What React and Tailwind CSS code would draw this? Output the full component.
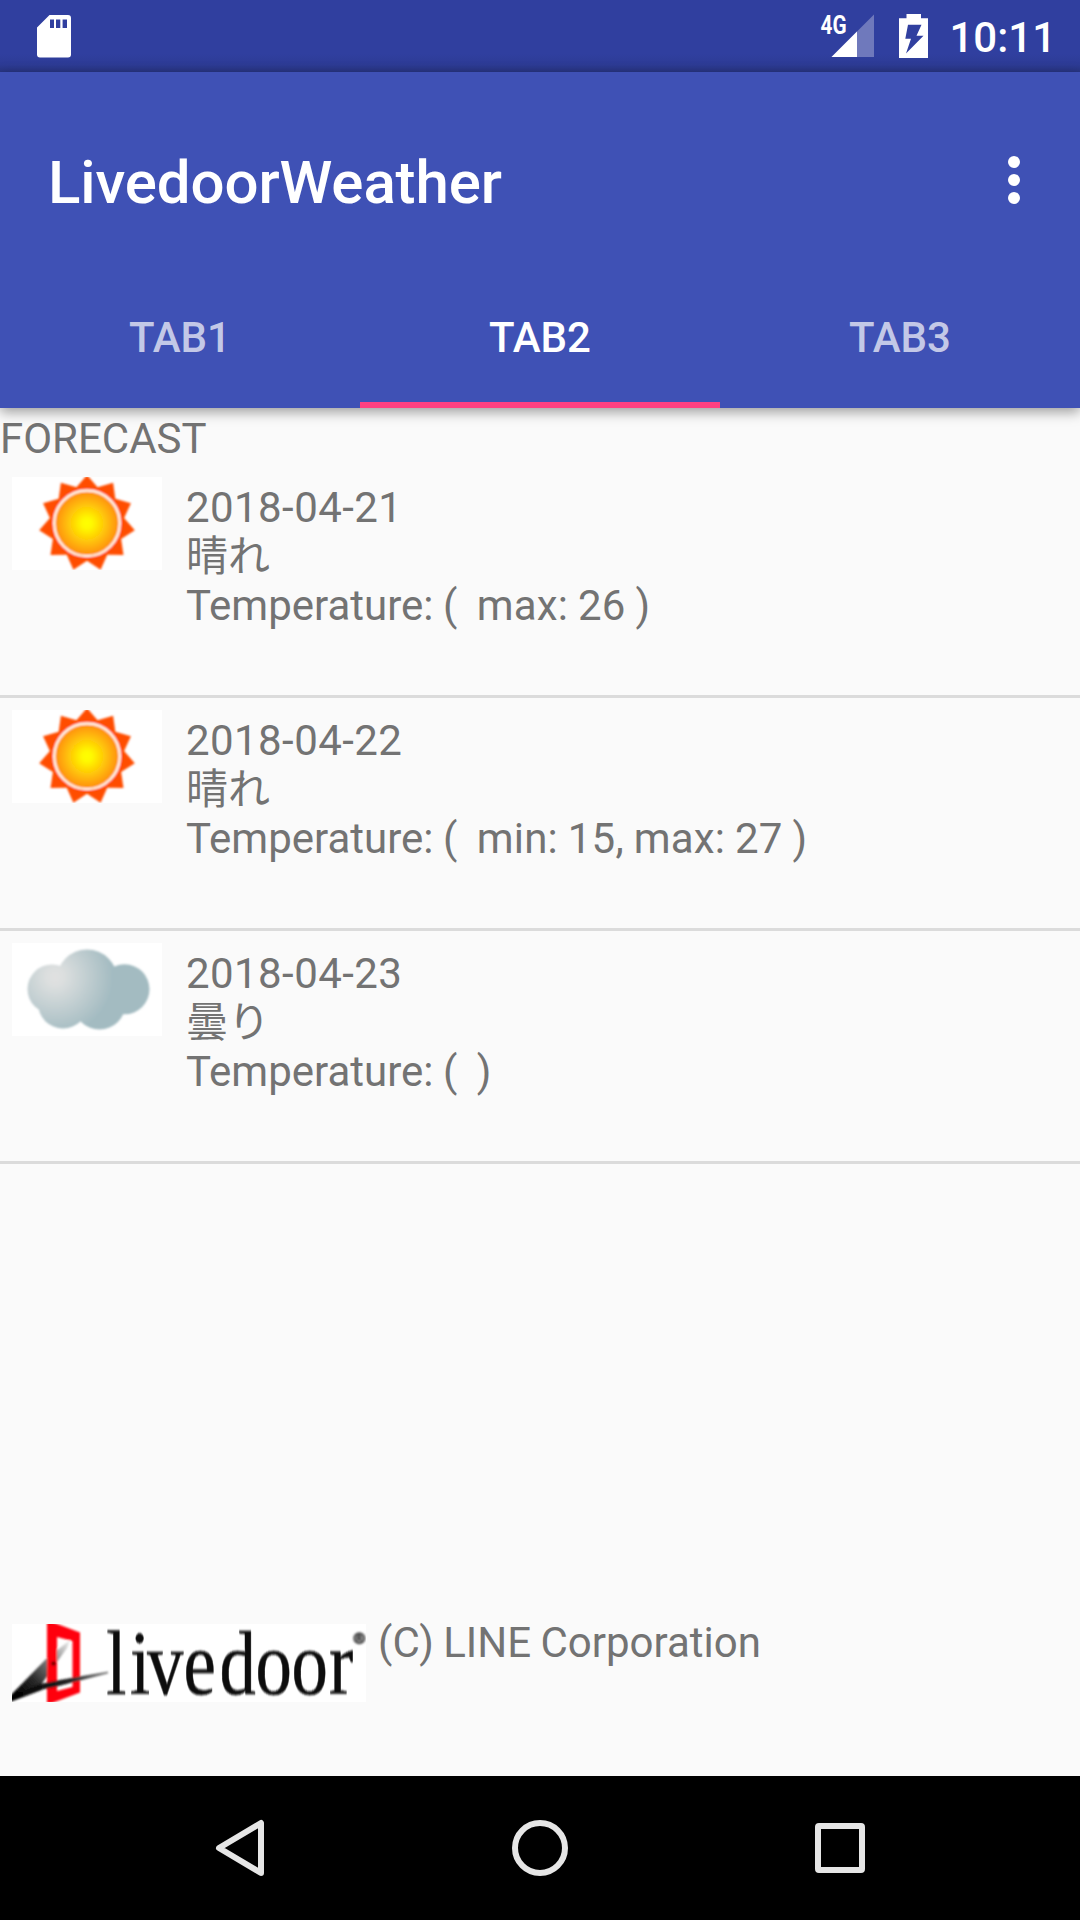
const sunPoints = Array.from({ length: 22 }, (_, i) => {
  const a = (i * Math.PI) / 11;
  const r = i % 2 === 0 ? 48.3 : 37.5;
  return `${(75 + r * Math.sin(a)).toFixed(2)},${(46.3 - r * Math.cos(a)).toFixed(2)}`;
}).join(' ');

function Sun() {
  return (
    <svg width="150" height="93" viewBox="0 0 150 93" className="block shrink-0 bg-white">
      <defs>
        <radialGradient id="sunFill">
          <stop offset="0" stopColor="#ffff00" />
          <stop offset="0.15" stopColor="#fffa00" />
          <stop offset="1" stopColor="#ff8a10" />
        </radialGradient>
        <filter id="sunSoft">
          <feGaussianBlur stdDeviation="0.8" />
        </filter>
      </defs>
      <g filter="url(#sunSoft)">
        <polygon points={sunPoints} fill="#ff4e00" />
        <circle cx="75" cy="46.3" r="32.8" fill="url(#sunFill)" stroke="#fffaf4" strokeWidth="2.4" />
      </g>
    </svg>
  );
}

function Cloud() {
  return (
    <svg width="150" height="93" viewBox="0 0 150 93" className="block shrink-0 bg-white">
      <defs>
        <radialGradient id="cloudFill" gradientUnits="userSpaceOnUse" cx="43" cy="34" r="58">
          <stop offset="0" stopColor="#e1e1e1" />
          <stop offset="0.15" stopColor="#dcdfdf" />
          <stop offset="1" stopColor="#a3bbc1" />
        </radialGradient>
        <filter id="cloudSoft">
          <feGaussianBlur stdDeviation="0.9" />
        </filter>
      </defs>
      <g fill="url(#cloudFill)" filter="url(#cloudSoft)">
        <circle cx="40" cy="46" r="24.5" />
        <circle cx="75" cy="37" r="30.5" />
        <circle cx="112.5" cy="46.3" r="25" />
        <circle cx="51" cy="60.5" r="25" />
        <circle cx="87.5" cy="60.5" r="26" />
      </g>
    </svg>
  );
}

function LivedoorLogo() {
  return (
    <svg width="354" height="78" viewBox="0 0 354 78" className="block shrink-0 overflow-visible bg-white">
      <defs>
        <linearGradient id="wedge" gradientUnits="userSpaceOnUse" x1="6" y1="72" x2="60" y2="18">
          <stop offset="0" stopColor="#000" />
          <stop offset="0.3" stopColor="#2a2a2a" />
          <stop offset="0.65" stopColor="#888" />
          <stop offset="1" stopColor="#f0f0f0" />
        </linearGradient>
        <linearGradient id="blade" gradientUnits="userSpaceOnUse" x1="0" y1="0" x2="96" y2="0">
          <stop offset="0" stopColor="#000" />
          <stop offset="0.6" stopColor="#222" />
          <stop offset="1" stopColor="#888" />
        </linearGradient>
        <filter id="logoSoft">
          <feGaussianBlur stdDeviation="0.8" />
        </filter>
        <clipPath id="logoBox">
          <rect width="354" height="78" />
        </clipPath>
      </defs>
      <g clipPath="url(#logoBox)">
        <g filter="url(#logoSoft)">
          <polygon points="-2,72 34,35 58,16 55,24 45,38 29,61 30,66 -2,78" fill="url(#wedge)" />
          <path d="M35 -2H40L68 8.5V68.500L40 79H35ZM45 13V67L60.500 63V17Z" fill="#ff0010" fillRule="evenodd" />
          <circle cx="41.500" cy="39.500" r="2.300" fill="#700" />
          <polygon points="-2,73 28,60 45,56.500 96,47.500 96,49.500 62,58 45,62.500 28,66 -2,77" fill="url(#blade)" />
          <circle cx="347.300" cy="14.300" r="5" fill="#999" stroke="#444" strokeWidth="2" />
          <path d="M345.500 17.500V11.500H348.500V14.500H345.500M347.500 14.500L349.500 17.500" stroke="#333" strokeWidth="1.300" fill="none" />
        </g>
      </g>
      <text
        transform="scale(0.8 1)"
        x="117.8 147.5 168.75 214.5 259.4 304.3 349.3 396.25"
        y="70"
        fontSize="91"
        fill="#0a0a0a"
        stroke="#0a0a0a"
        strokeWidth="0.5"
        filter="url(#logoSoft)"
        className="font-['Liberation_Serif',serif]"
      >
        livedoor
      </text>
    </svg>
  );
}

function StatusBar() {
  return (
    <div className="flex h-[72px] items-start bg-linear-to-b from-[#303f9f] from-75% via-[#2d3b95] via-90% to-[#283583] pr-[28px] pl-[37px] text-white">
      <svg width="34" height="43" viewBox="0 0 34 43" className="mt-[14.500px] block">
        <path
          fillRule="evenodd"
          fill="#fff"
          d="M12.500 0H31Q34 0 34 3V39.500Q34 42.500 31 42.500H3Q0 42.500 0 39.500V12.500ZM13 4.500V13H17V4.500ZM19 4.500V13H23.300V4.500ZM25.600 4.500V13H30V4.500Z"
        />
      </svg>
      <div className="grow" />
      <svg width="54" height="58" viewBox="0 0 54 58" className="block">
        <path d="M11.500 57L54 14.500V57Z" fill="#6f79bc" />
        <path d="M11.500 57L37 31.500V57Z" fill="#fff" />
        <text
          x="0.500"
          y="33.500"
          fontSize="26"
          fontWeight="700"
          textLength="26"
          lengthAdjust="spacingAndGlyphs"
          fill="#fff"
          className="font-[Roboto,sans-serif]"
        >
          4G
        </text>
      </svg>
      <svg width="29" height="58" viewBox="0 0 29 58" className="ml-[25px] block">
        <path
          fillRule="evenodd"
          fill="#fff"
          d="M7.500 14H22V18.300H29V58H0V18.300H7.500ZM9 24.700L6.300 38.700H12L7 53.500L24.500 35.700H17.500L22.500 24.700Z"
        />
      </svg>
      <span className="mt-[13px] ml-[20px] w-[104px] pl-[1.500px] text-[42px] leading-[49px] font-medium whitespace-nowrap">10:11</span>
    </div>
  );
}

const tabs = [
  { label: 'TAB1', active: false },
  { label: 'TAB2', active: true },
  { label: 'TAB3', active: false },
];

function AppBar() {
  return (
    <header className="z-10 h-[336px] bg-[#3f51b5] pt-6 shadow-[0_4px_12px_rgba(0,0,0,0.38)]">
      <div className="flex h-[168px] items-center justify-between pr-[60px] pl-12">
        <h1 className="pt-[5px] text-[60px] leading-[70px] font-medium tracking-[-0.1px] text-white">LivedoorWeather</h1>
        <svg width="12" height="48" viewBox="0 0 12 48" fill="#fff" className="block">
          <circle cx="6" cy="6" r="6" />
          <circle cx="6" cy="24" r="6" />
          <circle cx="6" cy="42" r="6" />
        </svg>
      </div>
      <nav className="grid h-[144px] grid-cols-3">
        {tabs.map((t) => (
          <div
            key={t.label}
            className={
              t.active
                ? 'border-b-[6px] border-[#ff4081] pt-[49px] text-center text-[42px] leading-[49px] font-medium text-white'
                : 'pt-[49px] text-center text-[42px] leading-[49px] font-medium text-white/70'
            }
          >
            {t.label}
          </div>
        ))}
      </nav>
    </header>
  );
}

const forecasts = [
  { date: '2018-04-21', telop: '晴れ', range: 'max: 26 ', Icon: Sun },
  { date: '2018-04-22', telop: '晴れ', range: 'min: 15, max: 27 ', Icon: Sun },
  { date: '2018-04-23', telop: '曇り', range: '', Icon: Cloud },
];

function NavigationBar() {
  return (
    <div className="flex h-[144px] items-center justify-between bg-black pr-[215px] pl-[215px]">
      <svg width="50" height="60" viewBox="0 0 50 60" fill="none" stroke="#e6e6e6" strokeWidth="6" strokeLinejoin="round" className="block">
        <path d="M46 5V55L4 30Z" />
      </svg>
      <svg width="56" height="56" viewBox="0 0 56 56" fill="none" stroke="#e6e6e6" strokeWidth="6" className="block">
        <circle cx="28" cy="28" r="25" />
      </svg>
      <div className="size-[50px] rounded-[4px] border-[6px] border-[#e6e6e6]" />
    </div>
  );
}

export default function App() {
  return (
    <div className="flex h-[1920px] w-[1080px] flex-col overflow-hidden bg-[#fafafa] font-[Roboto,'Noto_Sans_CJK_JP',sans-serif] text-[42px] leading-[49px] text-[#737373]">
      <StatusBar />
      <AppBar />
      <main className="flex grow flex-col">
        <h2 className="h-[57px] pt-[6px]">FORECAST</h2>
        <ul>
          {forecasts.map(({ date, telop, range, Icon }) => (
            <li key={date} className="flex h-[233px] items-start gap-6 border-b-[3px] border-[#dbdbdb] pt-3 pl-3">
              <Icon />
              <div className="pt-[6px] whitespace-pre">
                <p className="h-[49px] tracking-[0.42px]">{date}</p>
                <p className="h-[49px]">{telop}</p>
                <p className="h-[49px] [word-spacing:-0.8px]">
                  {'Temperature: (  '}
                  <span className="tracking-[0.21px]">{range}</span>)
                </p>
              </div>
            </li>
          ))}
        </ul>
        <footer className="mt-auto mb-[74px] flex items-start gap-3 pl-3">
          <LivedoorLogo />
          <p className="-mt-[6px] [word-spacing:-1px]">(C) LINE Corporation</p>
        </footer>
      </main>
      <NavigationBar />
    </div>
  );
}
